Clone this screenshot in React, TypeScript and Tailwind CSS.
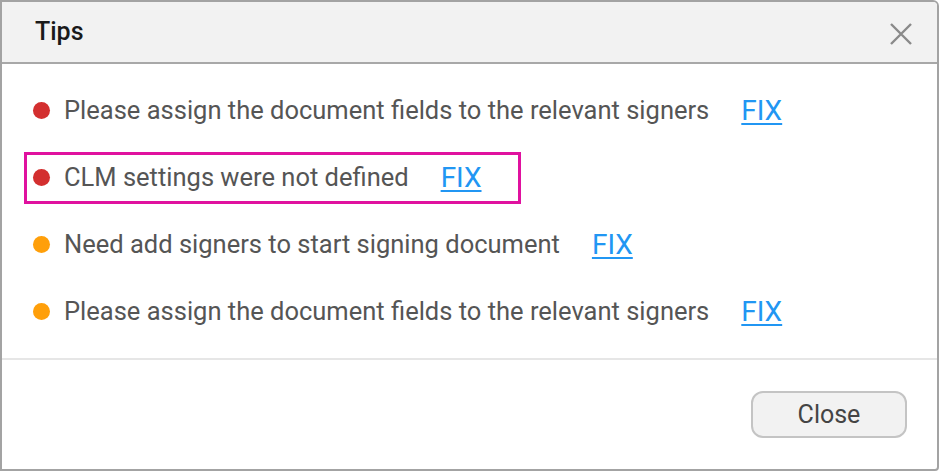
const ITEMS = [
  { color: "bg-[#d32f2f]", text: "Please assign the document fields to the relevant signers", highlight: false },
  { color: "bg-[#d32f2f]", text: "CLM settings were not defined", highlight: true },
  { color: "bg-[#ff9f0a]", text: "Need add signers to start signing document", highlight: false },
  { color: "bg-[#ff9f0a]", text: "Please assign the document fields to the relevant signers", highlight: false },
];

export default function App() {
  return (
    <div className="w-[940px] h-[472px] bg-white font-['Roboto',sans-serif]">
      <div className="w-[939px] h-[471px] border-2 border-[#a3a3a3] rounded-br-[4px] rounded-tr-[6px] flex flex-col overflow-hidden">
        {/* header */}
        <div className="h-[62px] shrink-0 bg-[#f2f2f2] border-b-2 border-[#a8a8a8] flex items-center justify-between pl-[33px] pr-[24px]">
          <h2 className="text-[25px] font-medium text-[#1a1a1a]">Tips</h2>
          <svg width="24" height="24" viewBox="0 0 24 24" className="mt-[3px]">
            <path d="M2 2L22 22M22 2L2 22" stroke="#8a8a8a" strokeWidth="2.4" fill="none" />
          </svg>
        </div>

        {/* list */}
        <div className="flex flex-col pt-[13px] pl-[22px] h-[296px] border-b-2 border-[#e6e6e6]">
          {ITEMS.map((item, i) => (
            <div key={i} className="h-[67px] flex items-center">
              <div
                className={
                  item.highlight
                    ? "flex items-center h-[52px] pl-[6px] pr-[36px] border-[3px] border-[#e0119f]"
                    : "flex items-center h-[52px] pl-[6px] border-[3px] border-transparent"
                }
              >
                <span className={`w-[17px] h-[17px] rounded-full ${item.color} shrink-0`} />
                <span className="ml-[14px] text-[25.5px] text-[#555]">{item.text}</span>
                <a href="#" className="ml-[32px] text-[28px] text-[#2196f3] underline underline-offset-[3px]">
                  FIX
                </a>
              </div>
            </div>
          ))}
        </div>

        {/* footer */}
        <div className="flex-1 flex items-center justify-end pr-[30px]">
          <button className="w-[156px] h-[47px] rounded-[12px] border-2 border-[#c4c4c4] bg-[#f2f2f2] text-[25px] text-[#444]">
            Close
          </button>
        </div>
      </div>
    </div>
  );
}
